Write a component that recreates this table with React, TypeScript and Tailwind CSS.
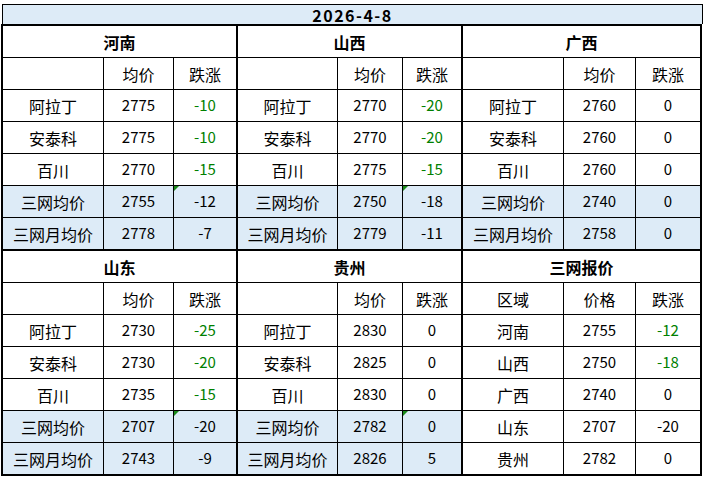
import React from 'react';

type Row = { name: string; price: string; change: string; green?: boolean; blue?: boolean; mark?: boolean };

type SectionProps = {
  title: string;
  heads: [string, string, string];
  rows: Row[];
  widths: [string, string];
  outer: string;
};

const font = { fontFamily: '"Noto Sans CJK SC", "Noto Sans", sans-serif' };

function Section({ title, heads, rows, widths, outer }: SectionProps) {
  return (
    <div className={`flex flex-col ${outer}`}>
      <div className="h-[32px] border-b border-black flex items-center justify-center text-[16px] font-bold text-black">
        {title}
      </div>
      <div className="h-[32px] border-b border-black flex text-[16px] text-black">
        <div className={`${widths[0]} border-r border-black flex items-center justify-center`}>{heads[0]}</div>
        <div className={`${widths[1]} border-r border-black flex items-center justify-center`}>{heads[1]}</div>
        <div className="flex-1 flex items-center justify-center">{heads[2]}</div>
      </div>
      {rows.map((r, i) => (
        <div
          key={r.name}
          className={`flex ${i < rows.length - 1 ? 'h-[32px] border-b border-black' : 'h-[31px]'} ${r.blue ? 'bg-[#ddebf7]' : 'bg-white'}`}
        >
          <div className={`${widths[0]} border-r border-black flex items-center justify-center text-[16px] text-black`}>
            {r.name}
          </div>
          <div className={`${widths[1]} border-r border-black flex items-center justify-center text-[15px] text-black`}>
            {r.price}
          </div>
          <div
            className={`relative flex-1 flex items-center justify-center text-[15px] ${r.green ? 'text-[#008000]' : 'text-black'}`}
          >
            {r.mark && (
              <span className="absolute left-0 top-0 w-0 h-0 border-t-[5px] border-t-[#1a8a1a] border-r-[5px] border-r-transparent"></span>
            )}
            {r.change}
          </div>
        </div>
      ))}
    </div>
  );
}

const avgHead: [string, string, string] = ['', '均价', '跌涨'];

export default function App() {
  return (
    <div className="w-[707px] h-[478px] bg-white overflow-hidden" style={font}>
      <div className="mt-[4px] ml-[2px] w-[701px] h-[20px] border-t border-l border-r border-black bg-[#ddebf7] flex items-center justify-center text-[16px] font-bold tracking-[1.5px] text-black">
        2026-4-8
      </div>
      <div className="ml-[1px] w-[701px] border-2 border-black flex flex-col">
        <div className="flex border-b-2 border-black">
          <Section
            title="河南"
            heads={avgHead}
            widths={['w-[101px]', 'w-[70px]']}
            outer="w-[235px] border-r-2 border-black"
            rows={[
              { name: '阿拉丁', price: '2775', change: '-10', green: true },
              { name: '安泰科', price: '2775', change: '-10', green: true },
              { name: '百川', price: '2770', change: '-15', green: true },
              { name: '三网均价', price: '2755', change: '-12', blue: true, mark: true },
              { name: '三网月均价', price: '2778', change: '-7', blue: true },
            ]}
          />
          <Section
            title="山西"
            heads={avgHead}
            widths={['w-[100px]', 'w-[65px]']}
            outer="w-[225px] border-r-2 border-black"
            rows={[
              { name: '阿拉丁', price: '2770', change: '-20', green: true },
              { name: '安泰科', price: '2770', change: '-20', green: true },
              { name: '百川', price: '2775', change: '-15', green: true },
              { name: '三网均价', price: '2750', change: '-18', blue: true, mark: true },
              { name: '三网月均价', price: '2779', change: '-11', blue: true },
            ]}
          />
          <Section
            title="广西"
            heads={avgHead}
            widths={['w-[101px]', 'w-[72px]']}
            outer="flex-1"
            rows={[
              { name: '阿拉丁', price: '2760', change: '0' },
              { name: '安泰科', price: '2760', change: '0' },
              { name: '百川', price: '2760', change: '0' },
              { name: '三网均价', price: '2740', change: '0', blue: true },
              { name: '三网月均价', price: '2758', change: '0', blue: true },
            ]}
          />
        </div>
        <div className="flex">
          <Section
            title="山东"
            heads={avgHead}
            widths={['w-[101px]', 'w-[70px]']}
            outer="w-[235px] border-r-2 border-black"
            rows={[
              { name: '阿拉丁', price: '2730', change: '-25', green: true },
              { name: '安泰科', price: '2730', change: '-20', green: true },
              { name: '百川', price: '2735', change: '-15', green: true },
              { name: '三网均价', price: '2707', change: '-20', blue: true, mark: true },
              { name: '三网月均价', price: '2743', change: '-9', blue: true },
            ]}
          />
          <Section
            title="贵州"
            heads={avgHead}
            widths={['w-[100px]', 'w-[65px]']}
            outer="w-[225px] border-r-2 border-black"
            rows={[
              { name: '阿拉丁', price: '2830', change: '0' },
              { name: '安泰科', price: '2825', change: '0' },
              { name: '百川', price: '2830', change: '0' },
              { name: '三网均价', price: '2782', change: '0', blue: true, mark: true },
              { name: '三网月均价', price: '2826', change: '5', blue: true },
            ]}
          />
          <Section
            title="三网报价"
            heads={['区域', '价格', '跌涨']}
            widths={['w-[101px]', 'w-[72px]']}
            outer="flex-1"
            rows={[
              { name: '河南', price: '2755', change: '-12', green: true },
              { name: '山西', price: '2750', change: '-18', green: true },
              { name: '广西', price: '2740', change: '0' },
              { name: '山东', price: '2707', change: '-20' },
              { name: '贵州', price: '2782', change: '0' },
            ]}
          />
        </div>
      </div>
    </div>
  );
}
